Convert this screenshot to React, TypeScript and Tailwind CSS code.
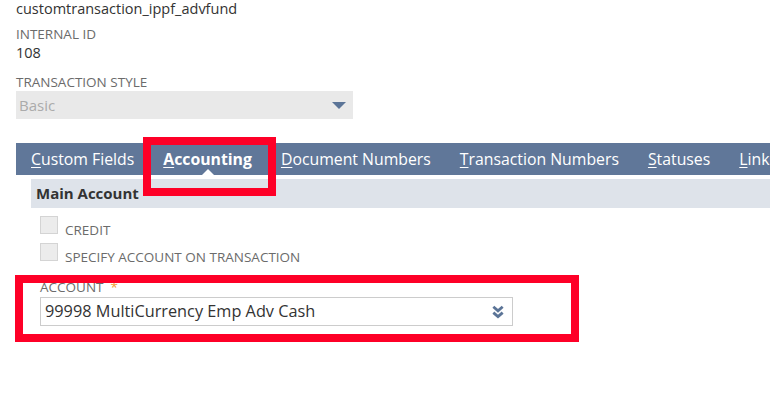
export default function App() {
  const tabs = ['Document Numbers', 'Transaction Numbers', 'Statuses', 'Links']

  return (
    <div className="relative w-[770px] h-[396px] overflow-hidden bg-white pl-4 text-[#333] font-['Open_Sans',sans-serif]">
      {/* Record header */}
      <div className="text-[14.5px] leading-[17px]">customtransaction_ippf_advfund</div>
      <div className="mt-[8px] text-[13.5px] leading-[18px] text-[#6b6b6b]">INTERNAL ID</div>
      <div className="text-[14.5px] leading-[19px]">108</div>
      <div className="mt-[11px] text-[13.5px] leading-[18px] text-[#6b6b6b]">TRANSACTION STYLE</div>
      <div className="flex h-[28px] w-[337px] items-center justify-between bg-[#e9e9e9] pl-[3px] pr-[7px] text-[15px] text-[#ababab]">
        <span>Basic</span>
        <svg width="14" height="7" viewBox="0 0 14 7">
          <polygon points="0,0 14,0 7,7" fill="#5b7497" />
        </svg>
      </div>

      {/* Tabs */}
      <div className="mt-[24px] flex h-8 gap-[29px] overflow-hidden whitespace-nowrap bg-[#607799] pl-[15px] text-[15.8px] leading-8 text-white">
        <span>
          <span className="underline underline-offset-2">C</span>ustom Fields
        </span>
        <span className="relative font-bold">
          <span className="underline underline-offset-2">A</span>ccounting
          <span className="absolute bottom-0 left-1/2 h-0 w-0 -translate-x-1/2 border-x-[6px] border-b-[6px] border-x-transparent border-b-white" />
        </span>
        {tabs.map((t) => (
          <span key={t}>
            <span className="underline underline-offset-2">{t.charAt(0)}</span>
            {t.slice(1)}
          </span>
        ))}
      </div>

      {/* Main Account section */}
      <div className="ml-[15px] mt-1 h-[29px] bg-[#dee3ea] pl-[5px] text-[15px] font-bold leading-[29px]">
        Main Account
      </div>
      <div className="ml-[24px] mt-[8px] flex flex-col gap-1">
        {['CREDIT', 'SPECIFY ACCOUNT ON TRANSACTION'].map((l) => (
          <div key={l} className="flex items-start gap-[7px]">
            <div className="h-[18px] w-[18px] border border-[#d4d4d4] bg-[#ececec]" />
            <span className="mt-[5px] text-[13.5px] leading-[18px] text-[#6b6b6b]">{l}</span>
          </div>
        ))}
      </div>

      <div className="ml-[24px] mt-[12px] text-[13.5px] leading-[18px] text-[#6b6b6b]">
        ACCOUNT<span className="ml-[7px] text-[#f29a2e]">*</span>
      </div>
      <div className="ml-[24px] mt-px flex h-[29px] w-[473px] items-center justify-between border border-[#cccccc] pl-[4px] pr-[7px] text-[16.3px]">
        <span>99998 MultiCurrency Emp Adv Cash</span>
        <svg width="14" height="14" viewBox="0 0 12 12">
          <polyline points="2,1.5 6,5 10,1.5" fill="none" stroke="#5b7497" strokeWidth="2.4" />
          <polyline points="2,6.5 6,10 10,6.5" fill="none" stroke="#5b7497" strokeWidth="2.4" />
        </svg>
      </div>

      {/* Annotation boxes */}
      <div className="absolute left-[143px] top-[137px] h-[59px] w-[133px] border-[8px] border-[#fe0027]" />
      <div className="absolute left-[15px] top-[275px] h-[67px] w-[564px] border-[8px] border-[#fe0027]" />
    </div>
  )
}
